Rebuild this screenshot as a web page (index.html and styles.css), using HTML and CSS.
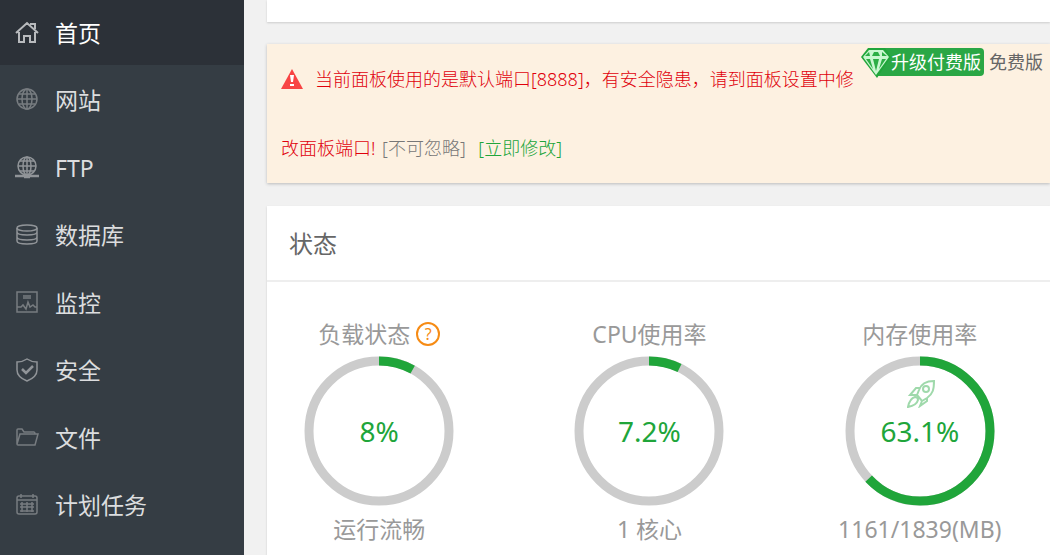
FILE: index.html
```
<!DOCTYPE html>
<html lang="zh-CN">
<head>
    <meta charset="UTF-8">
    <meta name="viewport" content="width=device-width, initial-scale=1.0">
    <title>首页</title>
    <link rel="stylesheet" href="styles.css">
</head>
<body>
    <div class="page">
        <nav class="sidebar">
            <a class="menu-item active" href="#">
                <svg viewBox="0 0 24 24"><path d="M1 12 12 2l11 10M4 11v10h5v-6h6v6h5V11M15 3h5v5"/></svg>
                <span>首页</span>
            </a>
            <a class="menu-item" href="#">
                <svg class="dim" viewBox="0 0 24 24"><circle cx="12" cy="11" r="10"/><ellipse cx="12" cy="11" rx="5" ry="10"/><path d="M12 1v20M2 11h20M4 6h16M4 16h16"/></svg>
                <span>网站</span>
            </a>
            <a class="menu-item" href="#">
                <svg viewBox="0 0 24 24"><circle cx="12" cy="10" r="9"/><ellipse cx="12" cy="10" rx="4" ry="9"/><path d="M12 1v18M3 10h18M5 5h14M5 15h14"/><path class="thick" d="M0 20h24M9 21h6"/></svg>
                <span>FTP</span>
            </a>
            <a class="menu-item" href="#">
                <svg viewBox="0 0 24 24"><ellipse cx="12" cy="5" rx="10" ry="3"/><path d="M2 5v13c0 4 20 4 20 0V5M2 9c0 4 20 4 20 0M2 14c0 4 20 4 20 0"/></svg>
                <span>数据库</span>
            </a>
            <a class="menu-item" href="#">
                <svg class="dim" viewBox="0 0 24 24"><path d="M2 1h20v20H2zM8 5h8M8 7h8M2 16h4l2-2 3 4 2-7 2 5 3-2 2 2h2"/></svg>
                <span>监控</span>
            </a>
            <a class="menu-item" href="#">
                <svg viewBox="0 0 24 24"><path d="M12 1c3 2 6 3 10 3v8c0 5-5 9-10 11C7 21 2 17 2 12V4c4 0 7-1 10-3z"/><path class="thick" d="m7 11 4 4 7-7"/></svg>
                <span>安全</span>
            </a>
            <a class="menu-item" href="#">
                <svg class="dim" viewBox="0 0 24 24"><path d="M2 18V4q0-1 1-1h4l2 3h10q1 0 1 2M2 18 5 8h18l-3 11H3q-1 0-1-1z"/></svg>
                <span>文件</span>
            </a>
            <a class="menu-item" href="#">
                <svg class="dim" viewBox="0 0 24 24"><rect x="2" y="3" width="20" height="18" rx="2"/><path d="M2 7h20M6 1v4M18 1v4M5 11h14M5 14h14M5 18h14M7 9v10M12 9v10M17 9v10"/></svg>
                <span>计划任务</span>
            </a>
        </nav>

        <main class="content">
            <div class="topbar"></div>

            <div class="alert">
                <p class="alert-text">
                    <svg class="warn" viewBox="0 0 22 20"><path fill="#f84444" d="M11 0 22 20H0z"/><path fill="#fff" d="M9 6h4l-1 7h-2zM9 15h4v2H9z"/></svg>当前面板使用的是默认端口[8888]，有安全隐患，请到面板设置中修改面板端口! <span class="noskip">[不可忽略]</span> <a class="fix" href="#">[立即修改]</a>
                </p>
                <div class="version">
                    <a class="upgrade" href="#">
                        <svg viewBox="0 0 30 30"><path fill="#20a53a" d="M7 0h17l6 9-14 21L0 9z"/><path fill="#c9f7d0" d="M8 2h14l6 7-13 18L2 9z"/><path fill="#2cae45" d="m8 4-4 4h5zM13 4l-2 4h8l-2-4zM21 4v4h5zM5 11l7 10-3-10zM12 11l3 12 3-12zM21 11l-3 10 7-10z"/></svg>升级付费版</a>
                    <span>免费版</span>
                </div>
            </div>

            <section class="card">
                <h3>状态</h3>
                <div class="charts">
                    <div class="chart">
                        <h4>负载状态 <button class="help" aria-label="帮助">?</button></h4>
                        <div class="ring">
                            <svg viewBox="0 0 150 150"><circle cx="75" cy="75" r="70"/><circle class="used" cx="75" cy="75" r="70" pathLength="100" stroke-dasharray="8 100"/></svg>
                            <span class="value">8%</span>
                        </div>
                        <p>运行流畅</p>
                    </div>
                    <div class="chart">
                        <h4>CPU使用率</h4>
                        <div class="ring">
                            <svg viewBox="0 0 150 150"><circle cx="75" cy="75" r="70"/><circle class="used" cx="75" cy="75" r="70" pathLength="100" stroke-dasharray="7.2 100"/></svg>
                            <span class="value">7.2%</span>
                        </div>
                        <p>1 核心</p>
                    </div>
                    <div class="chart">
                        <h4>内存使用率</h4>
                        <div class="ring">
                            <svg viewBox="0 0 150 150"><circle cx="75" cy="75" r="70"/><circle class="used" cx="75" cy="75" r="70" pathLength="100" stroke-dasharray="63.1 100"/></svg>
                            <svg class="rocket" viewBox="0 0 28 28"><path d="M27 1c-8 0-13 3-15 9l-2 5 5 6 5-3c6-4 7-9 7-17zM13 8 9 8l-6 7 7 0M20 18l0 3-7 5 2-5M8 17c-4 1-6 5-7 10 5-1 9-3 10-7 0-2-1-3-3-3z"/><circle cx="19" cy="9" r="3"/></svg>
                            <span class="value">63.1%</span>
                        </div>
                        <p>1161/1839(MB)</p>
                    </div>
                </div>
            </section>
        </main>
    </div>
</body>
</html>
```
FILE: styles.css
```
*{
    box-sizing: border-box;
}
body{
    margin: 0;
    background: #f1f1f1;
    font-family: "Noto Sans", "Noto Sans CJK SC", sans-serif;
    font-size: 18px;
    color: #666;
}
h3, h4, p{
    margin: 0;
    font-weight: 400;
}
a{
    text-decoration: none;
}
.page{
    display: flex;
    min-height: 100vh;
}
.sidebar{
    flex: 0 0 244px;
    display: grid;
    grid-auto-rows: 1fr;
    padding-bottom: 15px;
    background: #353d44;
}
.menu-item{
    display: flex;
    align-items: center;
    gap: 16px;
    height: 65px;
    padding-left: 15px;
    font-size: 23px;
    line-height: 30px;
    color: #dcdddf;
}
.menu-item.active{
    background: #2c3138;
    color: #fff;
}
.menu-item svg{
    width: 24px;
    height: 24px;
    fill: none;
    stroke: #909498;
    stroke-width: 1.5;
}
.menu-item.active svg{
    stroke: #b8babd;
    stroke-width: 2;
}
.menu-item .dim{
    stroke: #777c80;
}
.menu-item .thick{
    stroke-width: 2.5;
}
.content{
    flex: 1;
    display: flex;
    flex-direction: column;
    min-width: 0;
    padding-left: 23px;
}
.topbar{
    height: 22px;
    background: #fff;
    box-shadow: 0 1px 2px #ccc;
}
.alert{
    display: flex;
    align-items: flex-start;
    margin-top: 22px;
    padding: 1px 7px 0 14px;
    background: #fdf1e1;
    box-shadow: 0 1px 3px #bbb;
}
.alert-text{
    flex: 1;
    line-height: 69px;
    font-weight: 300;
    color: #e0000b;
}
.warn{
    width: 22px;
    height: 20px;
    margin-right: 12px;
    vertical-align: -3px;
}
.noskip{
    margin-left: 2px;
    color: #777;
}
.fix{
    margin-left: 8px;
    color: #20a53a;
}
.version{
    display: flex;
    gap: 5px;
    padding-top: 3px;
    line-height: 28px;
    white-space: nowrap;
}
.upgrade{
    display: flex;
    height: 28px;
    padding-right: 3px;
    border-radius: 4px;
    background: linear-gradient(90deg, transparent 15px, #2aa745 15px);
    color: #fff;
}
.upgrade svg{
    width: 30px;
    height: 30px;
}
.card{
    flex: 1;
    margin-top: 23px;
    background: #fff;
    box-shadow: 0 1px 2px #ccc;
}
.card h3{
    padding: 2px 22px 0;
    border-bottom: 2px solid #eee;
    line-height: 72px;
    font-size: 24px;
}
.charts{
    display: grid;
    grid-template-columns: repeat(3, 1fr);
    gap: 46px;
    padding: 30px 18px 0 0;
}
.chart{
    font-size: 23px;
    text-align: center;
    color: #999;
}
.chart h4{
    display: flex;
    justify-content: center;
    align-items: center;
    gap: 6px;
    line-height: 44px;
    font-size: 23px;
}
.chart p{
    line-height: 46px;
}
.help{
    width: 24px;
    height: 24px;
    padding: 0;
    border: 2px solid #f68b14;
    border-radius: 50%;
    background: none;
    font: 16px/20px "Noto Sans", sans-serif;
    color: #f68b14;
}
.ring{
    position: relative;
    display: flex;
    justify-content: center;
    align-items: center;
    width: 150px;
    height: 150px;
    margin: 0 auto;
}
.ring svg{
    position: absolute;
    inset: 0;
    fill: none;
    stroke: #ccc;
    stroke-width: 9;
    transform: rotate(-90deg);
}
.ring .used{
    stroke: #20a53a;
}
.ring .rocket{
    inset: 24px auto auto 62px;
    width: 28px;
    height: 28px;
    stroke: #9fd9ab;
    stroke-width: 2;
    transform: none;
}
.value{
    position: relative;
    font-size: 28px;
    color: #20a53a;
}
```
